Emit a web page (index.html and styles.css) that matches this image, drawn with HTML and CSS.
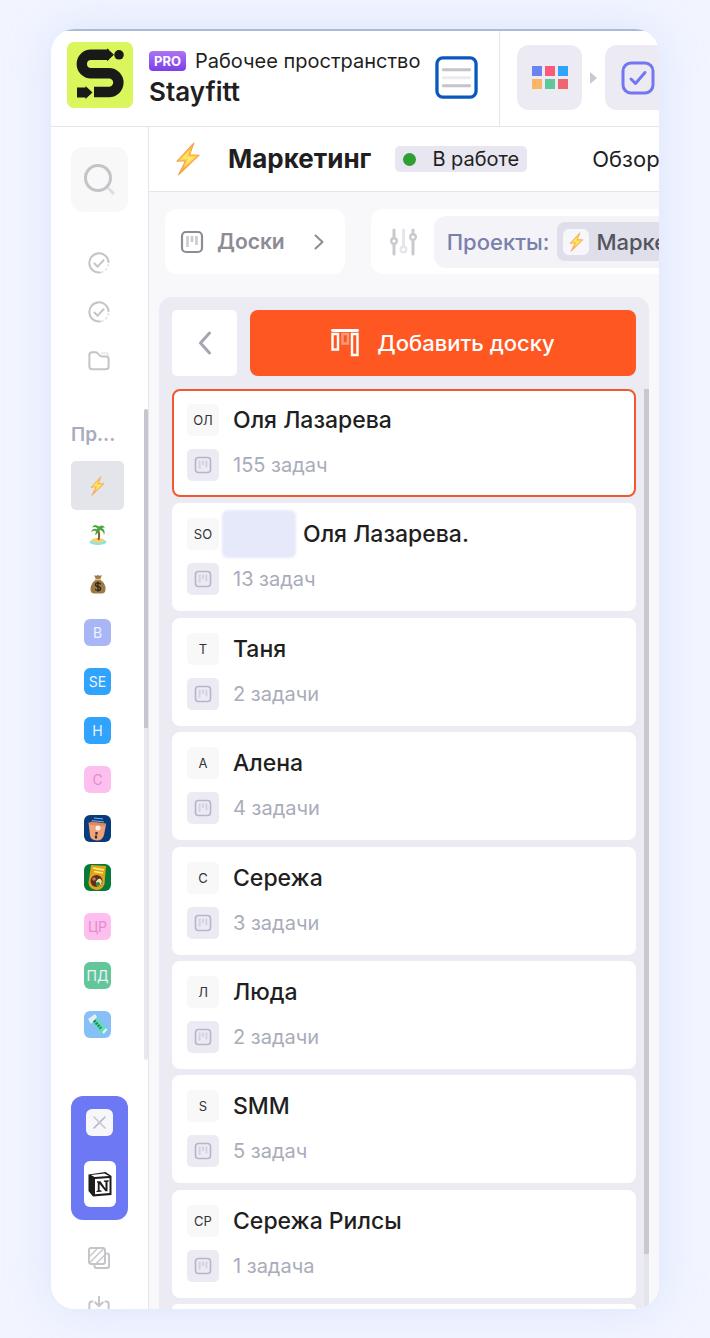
FILE: index.html
```html
<!DOCTYPE html>
<html lang="ru">
<head>
<meta charset="utf-8">
<meta name="viewport" content="width=device-width, initial-scale=1">
<title>Stayfitt</title>
<link rel="stylesheet" href="styles.css">
</head>
<body>
<svg class="sprite" aria-hidden="true">
  <defs>
    <linearGradient id="bolt-fill" x1="0" y1="0" x2="0" y2="1">
      <stop offset="0" stop-color="#ffb02e"/><stop offset=".5" stop-color="#ffd84a"/><stop offset="1" stop-color="#ff9a3c"/>
    </linearGradient>
    <symbol id="bolt" viewBox="0 0 24 32">
      <path d="M17.500 1 1.500 18.200l8.200-.6L3 31l19.500-18.600-9-.4z" fill="url(#bolt-fill)" stroke="#f5a04a" stroke-width="1" stroke-linejoin="round"/>
      <path d="M14.500 6.500 6 16l6.500-.6L8.500 23.500 17.500 14.300l-7-.4z" fill="#ffe873"/>
    </symbol>
    <symbol id="board" viewBox="0 0 24 24">
      <rect x="2" y="2" width="20" height="20" rx="4" fill="none" stroke="currentColor" stroke-width="2.200"/>
      <path d="M7.500 6v11M12 6v6M16.500 6v9" fill="none" stroke="currentColor" stroke-width="2.600" opacity=".45"/>
    </symbol>
    <symbol id="check-circle" viewBox="0 0 24 24">
      <path d="M13 22.400A10.500 10.500 0 1 1 22.400 11" fill="none" stroke="currentColor" stroke-width="2.200" stroke-linecap="round"/>
      <path d="M22.400 13A10.500 10.500 0 0 1 14 22.300" fill="none" stroke="currentColor" stroke-width="2" stroke-dasharray="3 2" opacity=".45"/>
      <path d="m7 12.500 3.500 3.500L17 9" fill="none" stroke="currentColor" stroke-width="2.200" stroke-linecap="round" stroke-linejoin="round"/>
    </symbol>
  </defs>
</svg>

<div class="app">
  <header class="topbar">
    <div class="workspace">
      <svg class="logo" viewBox="0 0 66 66" aria-hidden="true">
        <rect width="66" height="66" rx="7" fill="#d9f65c"/>
        <path d="M42 12.800H24a9.200 9.200 0 0 0 0 18.400h18a9.400 9.400 0 0 1 0 18.800H27" fill="none" stroke="#191a17" stroke-width="10.400"/>
        <path d="M40 6.300 47 12.800l-7 6.500z M10 45.500h8.500V44l7 6.500-7 6.500v-1.500H10z" fill="#191a17"/>
        <circle cx="52" cy="12.800" r="4.800" fill="#191a17"/>
      </svg>
      <div class="workspace-text">
        <div class="workspace-kind"><span class="pro">PRO</span><span>Рабочее пространство</span></div>
        <div class="workspace-name">Stayfitt</div>
      </div>
      <button class="menu" type="button" aria-label="Меню">
        <svg viewBox="0 0 44 44"><rect x="2" y="2" width="40" height="40" rx="6" fill="#fff" stroke="#0a58bd" stroke-width="3.400"/><path d="M8.500 14h27M8.500 30.500h27" stroke="#c4c4cb" stroke-width="3" stroke-linecap="round"/><path d="M8.500 22.200h27" stroke="#ebebee" stroke-width="3" stroke-linecap="round"/></svg>
      </button>
    </div>
    <nav class="apps" aria-label="Приложения">
      <button class="app-button" type="button" aria-label="Все приложения">
        <svg width="38" height="24" viewBox="0 0 38 24"><path fill="#6b82f2" d="M1 0h10v10H1z"/><path fill="#fb5a7b" d="M14 0h10v10H14z"/><path fill="#2fa4fb" d="M27 0h10v10H27z"/><path fill="#fcb566" d="M1 13h10v10H1z"/><path fill="#61c699" d="M14 13h10v10H14z"/><path fill="#ee6670" d="M27 13h10v10H27z"/></svg>
      </button>
      <svg class="arrow" width="9" height="14" viewBox="0 0 9 14" aria-hidden="true"><path d="M1 1v12l7-6z" fill="#c9c9cf"/></svg>
      <button class="app-button" type="button" aria-label="Задачи">
        <svg width="34" height="34" viewBox="0 0 34 34" fill="none" stroke="#7475f0" stroke-width="3"><rect x="2" y="2" width="30" height="30" rx="8"/><path d="m10 18 4.500 4.500 9.500-11" stroke-linecap="round" stroke-linejoin="round"/></svg>
      </button>
    </nav>
  </header>

  <div class="body">
    <aside class="sidebar">
      <button class="search" type="button" aria-label="Поиск">
        <svg width="34" height="34" viewBox="0 0 34 34" fill="none" stroke-linecap="round"><path d="m26 26 4 4" stroke="#dddde0" stroke-width="3"/><circle cx="15" cy="15" r="12.500" stroke="#c3c3c8" stroke-width="3"/></svg>
      </button>
      <nav class="shortcuts" aria-label="Разделы">
        <a class="side-link" href="#tasks" aria-label="Задачи"><svg><use href="#check-circle"/></svg></a>
        <a class="side-link" href="#my-tasks" aria-label="Мои задачи"><svg><use href="#check-circle"/></svg></a>
        <a class="side-link" href="#files" aria-label="Файлы"><svg viewBox="0 0 24 24" fill="none" stroke="currentColor" stroke-width="2.200"><path d="M14 3.500h6q2 0 2 3" opacity=".35"/><path d="M1.500 5.500q0-3 3-3h4c3 0 3 4.500 6.500 4.500h4.500q3 0 3 3v8q0 3-3 3h-15q-3 0-3-3z"/></svg></a>
      </nav>
      <section class="projects">
        <h2 class="projects-title">Пр...</h2>
        <nav class="project-list" aria-label="Проекты">
          <a class="project active" href="#p1" aria-label="Маркетинг"><svg class="small-bolt"><use href="#bolt"/></svg></a>
          <a class="project" href="#p2" aria-label="Остров"><svg width="20" height="22" viewBox="0 0 20 22"><ellipse cx="10" cy="18" rx="8.500" ry="3" fill="#7fe8ec"/><ellipse cx="10" cy="16.500" rx="6.500" ry="2.600" fill="#f7cf74"/><path d="M10 5q2 5 .5 11" stroke="#8a5a35" stroke-width="2" fill="none"/><path d="M10 5.500Q5 3 3 8q4-2 5-.5L7 11q4-2 3.500-5 5 0 5.500 5 2-5-2-7 2-1 3 0-2-4-6-1.500Q6-1 4 3.500q4-1.500 6 2z" fill="#49a83f"/></svg></a>
          <a class="project" href="#p3" aria-label="Бюджет"><svg width="18" height="20" viewBox="0 0 18 20"><path d="M5 1q2 1.500 4 0 2 1.500 4 0l-2 4.500q6 4 5.500 10 0 4-4 4h-7q-4 0-4-4 0-6 5.500-10z" fill="#9c7a45"/><path d="M6 5.500h6" stroke="#e4c06a" stroke-width="1.500"/><path d="M11.800 10.300q-1-1.500-2.800-1.500-2.500 0-2.500 1.800T9 12.700t2.600 1.900Q11.500 16.500 9 16.500q-2 0-2.900-1.500M9 7.500v10.300" stroke="#302719" stroke-width="1.300" fill="none"/></svg></a>
          <a class="project" href="#p4"><span class="tag tag-lilac">B</span></a>
          <a class="project" href="#p5"><span class="tag tag-blue">SE</span></a>
          <a class="project" href="#p6"><span class="tag tag-blue">H</span></a>
          <a class="project" href="#p7"><span class="tag tag-pink">C</span></a>
          <a class="project" href="#p8" aria-label="Упаковка"><svg width="27" height="27" viewBox="0 0 27 27"><rect width="27" height="27" rx="6" fill="#073b79"/><path d="M4.500 7.500 22 9.500l-2 10.500q-1.500 5.500-7 5.500-6.500-.5-7-5z" fill="#f0a279"/><path d="M7 6.500 22 8.500l-.5 3L5 9.500z" fill="#d98a63"/><path d="m10 3 9 1M8 5.500l12 1.500" stroke="#8fb1dc" stroke-width="1"/><circle cx="14" cy="13" r="2.500" fill="#fff0e4"/><path d="M12.500 17v2.500M12 20.500v3" stroke="#352a35" stroke-width="2.200"/></svg></a>
          <a class="project" href="#p9" aria-label="Продукт"><svg width="27" height="27" viewBox="0 0 27 27"><rect width="27" height="27" rx="6" fill="#057a3a"/><path d="m7 1 15 1-1.500 18Q18 26.500 12 26q-7-1.500-7.500-7z" fill="#e0a31a"/><path d="m9 4 11 2M10 7.500l9 1.500" stroke="#fff07a" stroke-width="1.500"/><circle cx="12.500" cy="17" r="6" fill="#612d20"/><path d="M12 17.500q4-6 6 0-1 5-5 5z" fill="#ece4b0"/><circle cx="14" cy="20" r="2" fill="#248b37"/><circle cx="10" cy="15" r="1.800" fill="#c07b55"/></svg></a>
          <a class="project" href="#p10"><span class="tag tag-pink">ЦР</span></a>
          <a class="project" href="#p11"><span class="tag tag-green">ПД</span></a>
          <a class="project" href="#p12" aria-label="Тюбик"><svg width="27" height="27" viewBox="0 0 27 27"><rect width="27" height="27" rx="6" fill="#87bff7"/><path d="m5 7 6-3 12 14-5 6z" fill="#62dfb2"/><path d="m4 8 7-5 2 3-6 7z" fill="#e2eff0"/><path d="m19 22 3.500-4" stroke="#e5fff6" stroke-width="2"/><path d="m10 9.500 7 8" stroke="#258078" stroke-width="3" stroke-dasharray="2 1"/></svg></a>
        </nav>
        <span class="side-scroll"></span>
      </section>
      <div class="dock">
        <button class="dock-close" type="button" aria-label="Закрыть"><svg width="13" height="13" viewBox="0 0 13 13" fill="none" stroke-width="1.500" stroke-linecap="round"><path d="m1 12 11-11" stroke="#b3b3bf"/><path d="m1 1 11 11" stroke="#c6c6cf"/></svg></button>
        <button class="dock-app" type="button" aria-label="Notion">
          <svg width="26" height="26" viewBox="0 0 26 26"><path d="m1.500 3.500 17-2.500 6 4v19l-18.500 1.500L1.500 20z" fill="#1c1c1c"/><path d="m4 4 13.500-1.500L22 5 7.500 6z" fill="#fff"/><path d="m8 8 14.500-1v15L8 23.300z" fill="#fff"/><path d="M10 10.200h3.500l5 7.300V11l-1.700-.3V9.500l5-.3v1.200l-1.300.4v9.400h-2L12.600 13v6.300l1.900.3v1.200l-5 .3v-1.200l1.300-.4v-7.700L10 11.400z" fill="#1c1c1c"/></svg>
        </button>
      </div>
      <nav class="tools" aria-label="Инструменты">
        <a class="side-link" href="#copies" aria-label="Шаблоны"><svg viewBox="0 0 24 24" fill="none" stroke="currentColor" stroke-width="2.200"><path d="M19 7h1.500q2.500 0 2.500 2.500v11q0 2.500-2.500 2.500h-11Q7 23 7 20.500V19"/><rect x="1" y="1" width="17.500" height="17.500" rx="2.500"/><path d="M2 10 10 2M2 17 17 2M9 18l9-9" stroke-width="1.500"/></svg></a>
        <a class="side-link" href="#import" aria-label="Импорт"><svg viewBox="0 0 24 24" fill="none" stroke="currentColor" stroke-width="2.200" stroke-linecap="round"><path d="M12 1v10m-4-4 4 4 4-4M5 6H4Q1.500 6 1.500 9v10q0 3 3 3h15q3 0 3-3V9q0-3-2.500-3h-1"/></svg></a>
      </nav>
    </aside>

    <main class="main">
      <div class="titlebar">
        <svg class="title-bolt" aria-hidden="true"><use href="#bolt"/></svg>
        <h1 class="title">Маркетинг</h1>
        <span class="status"><span class="dot"></span>В работе</span>
        <a class="tab" href="#overview">Обзор</a>
      </div>
      <div class="toolbar">
        <button class="view" type="button"><svg class="view-icon"><use href="#board"/></svg><span>Доски</span><svg class="view-next" width="10" height="16" viewBox="0 0 10 16"><path d="m1.500 1.500 7 6.500-7 6.500" fill="none" stroke="#8c8c94" stroke-width="2" stroke-linecap="round" stroke-linejoin="round"/></svg></button>
        <div class="filters">
          <svg class="sliders" width="28" height="28" viewBox="0 0 28 28" fill="none" stroke-width="3" stroke-linecap="round" aria-hidden="true"><g stroke="#c9c9cf"><path d="M5 2v7m0 8v9M24 2v3m0 8v13"/><circle cx="5" cy="13" r="2.800" stroke-width="2.400"/><circle cx="24" cy="9" r="2.800" stroke-width="2.400"/></g><g stroke="#e6e6ea"><path d="M14.500 2v15"/><circle cx="14.500" cy="21.500" r="2.800" stroke-width="2.400"/></g></svg>
          <div class="filter"><span>Проекты:</span><span class="chip"><span class="chip-icon"><svg class="small-bolt"><use href="#bolt"/></svg></span>Маркетинг</span></div>
        </div>
      </div>
      <section class="panel">
        <div class="panel-head">
          <button class="back" type="button" aria-label="Назад"><svg width="14" height="24" viewBox="0 0 14 24"><path d="M11.500 2 2.500 12l9 10" fill="none" stroke="#a3a5b4" stroke-width="3" stroke-linecap="round" stroke-linejoin="round"/></svg></button>
          <button class="add" type="button"><svg width="28" height="28" viewBox="0 0 28 28" fill="none" stroke="#fff" stroke-width="2.400"><path d="M1.500 1.500h25" stroke-width="2.800" stroke-linecap="round"/><path d="M1.500 5h5.500v15.500H1.500zM21 5h5.500v21H21z"/><path d="M11.500 5H17v9.500h-5.500z" opacity=".4"/></svg><span>Добавить доску</span></button>
        </div>
        <ul class="boards">
          <li class="board selected"><div class="row"><span class="initials">ОЛ</span><span class="name">Оля Лазарева</span></div><div class="row"><span class="kind"><svg><use href="#board"/></svg></span><span class="count">155 задач</span></div></li>
          <li class="board"><div class="row"><span class="initials">SO</span><span class="redacted"></span><span class="name">Оля Лазарева.</span></div><div class="row"><span class="kind"><svg><use href="#board"/></svg></span><span class="count">13 задач</span></div></li>
          <li class="board"><div class="row"><span class="initials">Т</span><span class="name">Таня</span></div><div class="row"><span class="kind"><svg><use href="#board"/></svg></span><span class="count">2 задачи</span></div></li>
          <li class="board"><div class="row"><span class="initials">А</span><span class="name">Алена</span></div><div class="row"><span class="kind"><svg><use href="#board"/></svg></span><span class="count">4 задачи</span></div></li>
          <li class="board"><div class="row"><span class="initials">С</span><span class="name">Сережа</span></div><div class="row"><span class="kind"><svg><use href="#board"/></svg></span><span class="count">3 задачи</span></div></li>
          <li class="board"><div class="row"><span class="initials">Л</span><span class="name">Люда</span></div><div class="row"><span class="kind"><svg><use href="#board"/></svg></span><span class="count">2 задачи</span></div></li>
          <li class="board"><div class="row"><span class="initials">S</span><span class="name">SMM</span></div><div class="row"><span class="kind"><svg><use href="#board"/></svg></span><span class="count">5 задач</span></div></li>
          <li class="board"><div class="row"><span class="initials">СР</span><span class="name">Сережа Рилсы</span></div><div class="row"><span class="kind"><svg><use href="#board"/></svg></span><span class="count">1 задача</span></div></li>
          <li class="board-edge"></li>
        </ul>
        <span class="panel-scroll"></span>
      </section>
    </main>
  </div>
</div>
</body>
</html>
```

FILE: styles.css
```css
* { box-sizing: border-box; }

body {
  margin: 0;
  height: 100vh;
  padding: 29px 51px;
  overflow: hidden;
  background: #f2f5ff;
  font-family: Inter, "Noto Sans", sans-serif;
  color: #1f1f22;
}

button { border: 0; padding: 0; background: none; font: inherit; color: inherit; cursor: pointer; }
a { color: inherit; text-decoration: none; }
svg { display: block; flex: none; }
h1, h2, ul { margin: 0; padding: 0; list-style: none; }
.sprite { position: absolute; width: 0; height: 0; }

.app {
  display: flex;
  flex-direction: column;
  height: 100%;
  overflow: hidden;
  border-radius: 24px;
  background: linear-gradient(#a9bcd6 2px, #fff 2px);
  box-shadow: 0 0 44px rgba(176, 196, 250, .36);
}

/* top bar */
.topbar { display: flex; flex: none; height: 98px; border-bottom: 1px solid #e6e6ea; }
.workspace {
  display: flex;
  flex: none;
  align-items: center;
  margin-top: 2px;
  padding: 0 21px 2px 16px;
  border-right: 1px solid #e6e6ea;
}
.logo { width: 66px; height: 66px; margin-bottom: 6px; }
.workspace-text { width: 268px; margin: 0 18px 2px 16px; white-space: nowrap; }
.workspace-kind { display: flex; align-items: center; gap: 9px; font-size: 20px; line-height: 30px; }
.pro {
  padding: 0 5px;
  border-radius: 4px;
  background: linear-gradient(#ac74f4, #7d3ee8);
  color: #fff;
  font-size: 13px;
  font-weight: 700;
  line-height: 20px;
}
.workspace-name { font-size: 26px; font-weight: 600; line-height: 32px; }
.menu svg { width: 43px; height: 43px; }
.apps { display: flex; align-items: center; padding-left: 17px; }
.app-button {
  display: flex;
  flex: none;
  align-items: center;
  justify-content: center;
  width: 65px;
  height: 65px;
  border-radius: 12px;
  background: #ecebf4;
}
.arrow { margin: 0 7px; }

/* sidebar */
.body { display: flex; flex: 1; min-height: 0; }
.sidebar {
  display: flex;
  flex: none;
  flex-direction: column;
  width: 98px;
  padding-top: 20px;
  border-right: 1px solid #e6e6ea;
  overflow: hidden;
}
.search {
  display: flex;
  flex: none;
  align-items: center;
  justify-content: center;
  width: 57px;
  height: 65px;
  margin-left: 20px;
  border-radius: 12px;
  background: #f8f8f9;
}
.shortcuts { margin-top: 26px; }
.side-link { display: flex; align-items: center; justify-content: center; height: 49px; padding-right: 1px; color: #c5c5c9; }
.side-link svg { width: 22px; height: 22px; }
.projects { position: relative; flex: none; margin-top: 24px; padding: 0 24px 11px 20px; }
.projects-title { color: #a9acbd; font-size: 19px; font-weight: 600; line-height: 52px; }
.project { display: flex; align-items: center; justify-content: center; height: 49px; border-radius: 5px; }
.active { background: #e3e5eb; }
.small-bolt { width: 17px; height: 20px; }
.tag {
  width: 27px;
  border-radius: 6px;
  color: #eef3ff;
  font-size: 14px;
  line-height: 27px;
  text-align: center;
}
.tag-lilac { background: #a9b6f5; }
.tag-blue { background: #30a3fc; }
.tag-pink { background: #fdbfee; color: #e58bcf; }
.tag-green { background: #62c69a; }
.side-scroll {
  position: absolute;
  top: 0;
  right: 0;
  bottom: 0;
  width: 4px;
  border-radius: 2px;
  background: linear-gradient(#c5c5cd 49%, #e8e8ee 49%);
}
.dock {
  display: flex;
  flex: none;
  flex-direction: column;
  align-items: center;
  gap: 25px;
  width: 57px;
  margin: 36px 0 13px 20px;
  padding: 13px 0;
  border-radius: 12px;
  background: #6c78f4;
}
.dock-close, .dock-app { display: flex; align-items: center; justify-content: center; background: #fff; }
.dock-close { width: 27px; height: 27px; border-radius: 6px; background: #f7f7fb; }
.dock-app { width: 32px; height: 46px; border-radius: 6px; }

/* main area */
.main { display: flex; flex: 1; flex-direction: column; min-width: 0; overflow: hidden; background: #f8f8fa; }
.titlebar {
  display: flex;
  flex: none;
  align-items: center;
  height: 65px;
  padding-left: 26px;
  border-bottom: 1px solid #e6e6ea;
  background: #fff;
  white-space: nowrap;
}
.title-bolt { width: 26px; height: 34px; }
.title { margin: 0 24px 0 27px; font-size: 26px; font-weight: 700; line-height: 32px; }
.status {
  display: flex;
  align-items: center;
  gap: 16px;
  padding: 0 8px;
  border-radius: 5px;
  background: #e7e6f1;
  font-size: 20px;
  line-height: 26px;
}
.dot { width: 13px; height: 13px; border-radius: 50%; background: #2f9e35; }
.tab { margin-left: 65px; font-size: 22px; }
.toolbar { display: flex; flex: none; gap: 26px; padding: 17px 0 23px 16px; white-space: nowrap; }
.view, .filters { display: flex; flex: none; align-items: center; height: 65px; border-radius: 12px; background: #fff; }
.view { padding: 0 21px 0 15px; color: #8c8c94; font-size: 21px; font-weight: 600; }
.view-icon { width: 24px; height: 24px; margin-right: 13px; }
.view-next { margin-left: 29px; }
.filters { padding-left: 18px; }
.sliders { margin-right: 17px; }
.filter {
  display: flex;
  align-items: center;
  gap: 8px;
  height: 52px;
  padding: 0 6px 0 13px;
  border-radius: 12px;
  background: #f3f3f8;
  color: #7a80ab;
  font-size: 22px;
  font-weight: 500;
}
.chip { display: flex; align-items: center; gap: 7px; height: 39px; padding: 0 6px; border-radius: 8px; background: #dfdeeb; color: #55555e; }
.chip-icon { display: flex; align-items: center; justify-content: center; width: 26px; height: 26px; border-radius: 6px; background: #f7f7fb; }

/* board list */
.panel {
  position: relative;
  display: flex;
  flex: 1;
  flex-direction: column;
  gap: 13px;
  min-height: 0;
  margin: 0 10px;
  padding: 13px 13px 0;
  border-radius: 13px 13px 0 0;
  background: #ecebf3;
}
.panel-head { display: flex; flex: none; gap: 13px; height: 66px; }
.back, .add { display: flex; align-items: center; justify-content: center; border-radius: 8px; }
.back { flex: none; width: 65px; border-radius: 5px; background: #fff; }
.add { flex: 1; gap: 18px; background: #ff5722; color: #fff; font-size: 22px; font-weight: 500; }
.boards { display: flex; flex: 1; flex-direction: column; justify-content: space-between; min-height: 0; }
.board {
  display: flex;
  flex: none;
  flex-direction: column;
  gap: 13px;
  padding: 13px 13px 14px;
  border: 2px solid #fff;
  border-radius: 8px;
  background: #fff;
}
.selected { border-color: #f0582e; }
.board-edge { flex: none; height: 5px; border-radius: 8px 8px 0 0; background: #fff; }
.row { display: flex; align-items: center; gap: 14px; height: 32px; }
.initials, .kind {
  display: flex;
  flex: none;
  align-items: center;
  justify-content: center;
  width: 32px;
  height: 32px;
  border-radius: 5px;
}
.initials { background: #f8f8f9; color: #333338; font-size: 13px; }
.kind { background: #ecebf4; color: #b5b6c8; }
.kind svg { width: 18px; height: 18px; }
.name { font-size: 23px; font-weight: 500; white-space: nowrap; }
.count { color: #a9acb9; font-size: 20px; }
.redacted { width: 74px; height: 48px; margin: 0 -7px 0 -11px; border-radius: 6px; background: #e6e9fa; filter: blur(1px); }
.panel-scroll {
  position: absolute;
  top: 92px;
  right: 0;
  bottom: 0;
  width: 5px;
  background: linear-gradient(#c9c8d0 94%, #e2e6ec 94%);
}
```
